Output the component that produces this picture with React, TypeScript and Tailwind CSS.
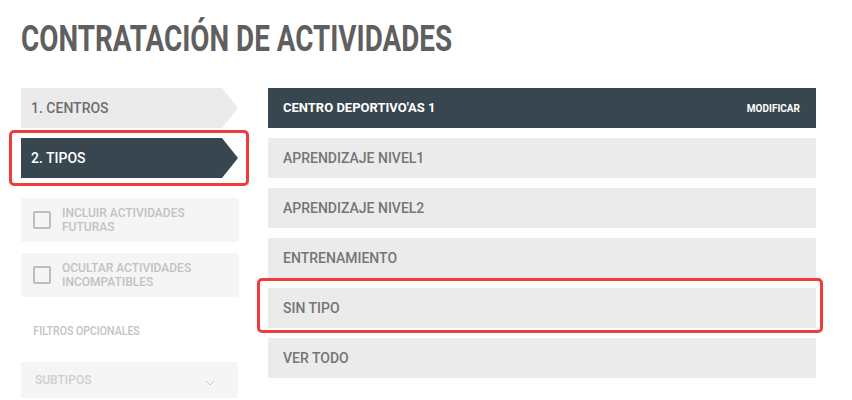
import { ChevronDown } from "lucide-react";

const tipos = ["APRENDIZAJE NIVEL1", "APRENDIZAJE NIVEL2", "ENTRENAMIENTO", "SIN TIPO", "VER TODO"];

function Step({ label, active }: { label: string; active?: boolean }) {
  const fill = active ? "#37464f" : "#ebebeb";
  return (
    <div className="flex h-10">
      <div
        className={`flex-1 flex items-center pl-[10px] text-[14px] font-medium ${
          active ? "bg-[#37464f] text-white" : "bg-[#ebebeb] text-[#6e6e6e]"
        }`}
      >
        {label}
      </div>
      <svg width="16" height="40" viewBox="0 0 16 40" className="block">
        <polygon points="0,0 16,20 0,40" fill={fill} />
      </svg>
    </div>
  );
}

function Check({ lines }: { lines: string[] }) {
  return (
    <div className="h-11 w-[218px] rounded-[3px] bg-[#f5f5f5] flex items-center pl-[12px] gap-[11px]">
      <div className="w-[18px] h-[18px] rounded-[2px] border-2 border-[#bdbdbd] bg-transparent" />
      <div className="text-[12px] leading-[14px] font-medium text-[#c2c2c2]">
        {lines.map((l) => (
          <div key={l}>{l}</div>
        ))}
      </div>
    </div>
  );
}

export default function App() {
  return (
    <div className="relative w-[852px] h-[400px] overflow-hidden bg-white font-['Roboto',sans-serif]">
      <div className="pl-[21px] pt-[19px]">
        <h1 className="origin-left scale-x-[0.773] whitespace-nowrap text-[36px] leading-[40px] font-bold text-[#5f5f5f]">
          CONTRATACIÓN DE ACTIVIDADES
        </h1>

        <div className="flex gap-[30px] mt-[29px]">
          {/* left column */}
          <div className="w-[217px] flex flex-col">
            <Step label="1. CENTROS" />
            <div className="mt-[10px]">
              <Step label="2. TIPOS" active />
            </div>
            <div className="mt-[20px] flex flex-col gap-[11px]">
              <Check lines={["INCLUIR ACTIVIDADES", "FUTURAS"]} />
              <Check lines={["OCULTAR ACTIVIDADES", "INCOMPATIBLES"]} />
            </div>
            <div className="mt-[25px] pl-[14px] text-[12px] font-medium text-[#c2c2c2] origin-left scale-x-[0.88] whitespace-nowrap">
              FILTROS OPCIONALES
            </div>
            <div className="mt-[22px] h-9 bg-[#f5f5f5] flex items-center justify-between pl-[14px] pr-[20px]">
              <span className="text-[12px] font-medium text-[#cfcfcf]">SUBTIPOS</span>
              <ChevronDown className="w-4 h-4 mt-[6px] text-[#c8c8c8]" strokeWidth={1.5} />
            </div>
          </div>

          {/* right column */}
          <div className="w-[548px] flex flex-col gap-[10px]">
            <div className="h-10 bg-[#37464f] flex items-center justify-between pl-[15px] pr-[16px]">
              <span className="text-[13px] font-bold text-white">CENTRO DEPORTIVO'AS 1</span>
              <span className="text-[10px] font-bold text-white">MODIFICAR</span>
            </div>
            {tipos.map((t) => (
              <div key={t} className="h-10 bg-[#ebebeb] flex items-center pl-[15px] text-[14px] font-medium text-[#757575]">
                {t}
              </div>
            ))}
          </div>
        </div>
      </div>

      {/* annotation boxes */}
      <div className="absolute left-[9px] top-[130px] w-[240px] h-[56px] rounded-[5px] border-[3px] border-[#ee3b3b]" />
      <div className="absolute left-[257px] top-[278px] w-[566px] h-[55px] rounded-[5px] border-[3px] border-[#ee3b3b]" />
    </div>
  );
}
